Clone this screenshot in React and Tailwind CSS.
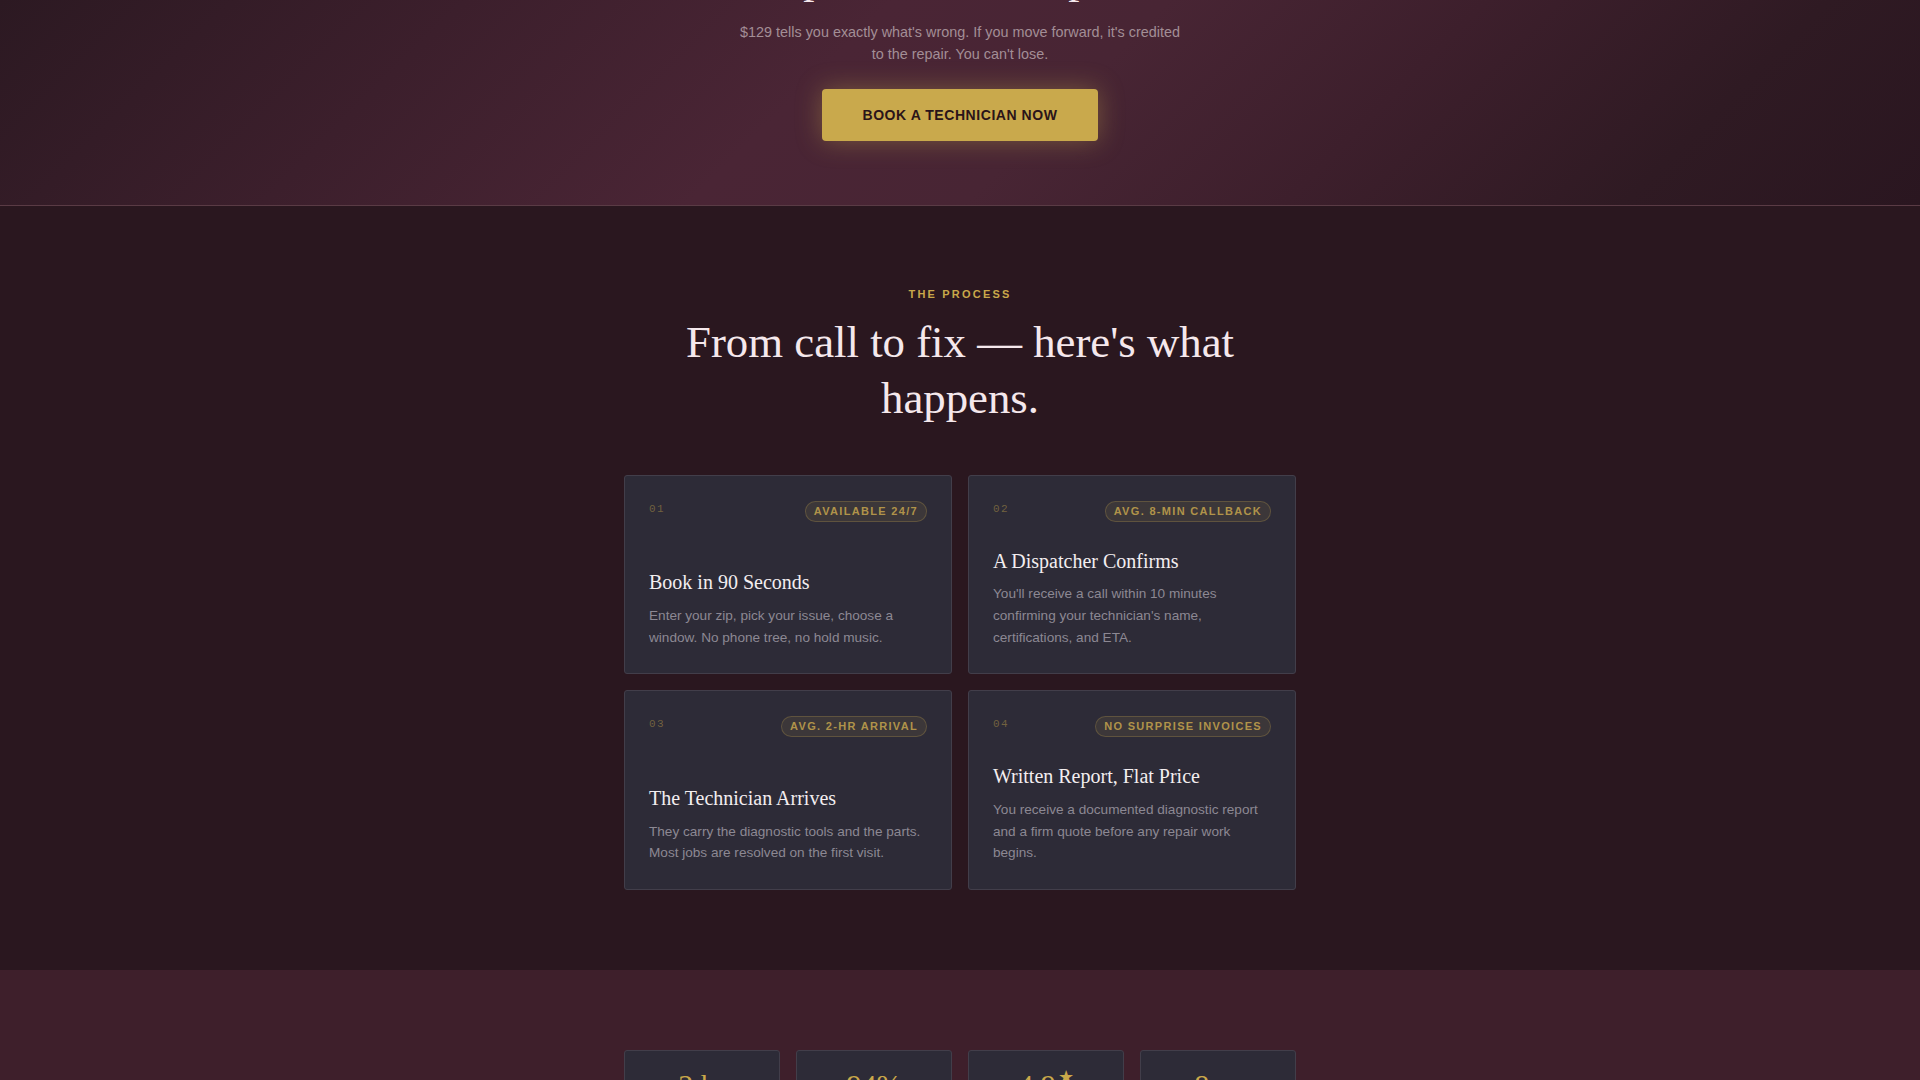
import React from 'react';

const STEPS = [
    {
        num: '01',
        badge: 'Available 24/7',
        title: 'Book in 90 Seconds',
        body: 'Enter your zip, pick your issue, choose a window. No phone tree, no hold music.',
    },
    {
        num: '02',
        badge: 'Avg. 8-min callback',
        title: 'A Dispatcher Confirms',
        body: "You'll receive a call within 10 minutes confirming your technician's name, certifications, and ETA.",
    },
    {
        num: '03',
        badge: 'Avg. 2-hr arrival',
        title: 'The Technician Arrives',
        body: 'They carry the diagnostic tools and the parts. Most jobs are resolved on the first visit.',
    },
    {
        num: '04',
        badge: 'No surprise invoices',
        title: 'Written Report, Flat Price',
        body: 'You receive a documented diagnostic report and a firm quote before any repair work begins.',
    },
];

const STATS = [
    { value: '2 hr', label: 'Average arrival time' },
    { value: '94%', label: 'Fixed on the first visit' },
    { value: '4.9', star: true, label: 'Average customer rating' },
    { value: '8 yr', label: 'Average tech experience' },
];

const serif = { fontFamily: '"Liberation Serif", "Times New Roman", serif' };

function StepCard({ step }) {
    return (
        <div className="flex flex-col rounded-[3px] border border-[#423e4a] bg-[#2d2b37] px-6 pt-[25px] pb-[25px]">
            <div className="mb-[26px] flex items-start justify-between">
                <span className="font-['Liberation_Mono',monospace] text-[11px] leading-4 tracking-[0.12em] text-[#c9a84a]/45">
                    {step.num}
                </span>
                <span className="rounded-full border border-[#c9a84a]/25 bg-[#c9a84a]/10 px-2 py-[2px] text-[11px] font-bold uppercase leading-[15px] tracking-[0.12em] text-[#b0934a]">
                    {step.badge}
                </span>
            </div>
            <div className="mt-auto">
                <h3 style={serif} className="mb-2 text-xl leading-snug text-[#f3eef0]">
                    {step.title}
                </h3>
                <p className="text-[0.85rem] leading-[1.6] text-[#8c8893]">{step.body}</p>
            </div>
        </div>
    );
}

export default function App() {
    return (
        <div className="min-h-screen bg-[#2a171f] font-['Liberation_Sans',Arial,sans-serif]">
            {/* Hero tail: diagnostic offer + CTA */}
            <section className="flex flex-col items-center border-b border-[#5a3b45] bg-[linear-gradient(135deg,#2c1922_0%,#3c1f2c_22%,#4a2535_42%,#482534_55%,#3d1f2c_70%,#2f1a23_86%,#2a1620_100%)] px-6 pb-16 text-center">
                <h1 style={serif} className="-mt-[49px] mb-[15px] text-[2.8rem] leading-tight text-[#f5e8ec]">
                    Simple answers. Upfront.
                </h1>
                <p className="max-w-[28rem] text-[0.9rem] leading-normal text-[#a38e96]">
                    $129 tells you exactly what's wrong. If you move forward, it's credited to the repair. You can't lose.
                </p>
                <button className="mt-6 rounded-[4px] bg-[#c9a94c] px-10 py-4 text-sm font-bold uppercase leading-5 tracking-[0.04em] text-[#2a1419] shadow-[0_0_26px_rgba(201,168,76,0.38)]">
                    Book a Technician Now
                </button>
            </section>

            {/* Process steps */}
            <section className="flex flex-col items-center px-6 pt-20 pb-20">
                <p className="text-[11px] font-bold uppercase leading-[16.5px] tracking-[0.2em] text-[#c9a84a]">
                    The Process
                </p>
                <h2 style={serif} className="mt-3 mb-12 max-w-2xl text-center text-[2.8rem] leading-tight text-[#f5e8ec]">
                    From call to fix — here's what happens.
                </h2>
                <div className="grid w-[672px] grid-cols-2 gap-4">
                    {STEPS.map(step => (
                        <StepCard key={step.num} step={step} />
                    ))}
                </div>
            </section>

            {/* Numbers strip */}
            <section className="flex justify-center bg-[#3e1f2b] px-6 pt-20 pb-20">
                <div className="grid w-[672px] grid-cols-4 gap-4">
                    {STATS.map(s => (
                        <div key={s.label} className="rounded-[3px] border border-[#423e4a] bg-[#2d2b37] px-4 pt-4 pb-5 text-center">
                            <div style={serif} className="text-[30px] leading-[1.2] text-[#c9a84a]">
                                {s.value}
                                {s.star && <span className="ml-0.5 text-[18px] align-top">★</span>}
                            </div>
                            <div className="mt-1 text-xs text-[#8c8893]">{s.label}</div>
                        </div>
                    ))}
                </div>
            </section>
        </div>
    );
}
